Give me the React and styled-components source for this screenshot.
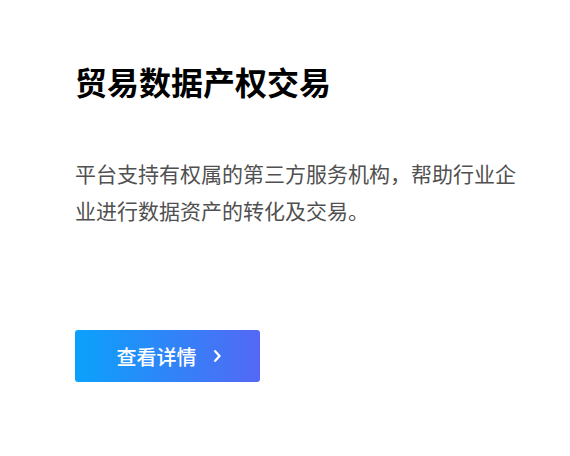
import React from "react";
import styled, { createGlobalStyle } from "styled-components";

const GlobalStyle = createGlobalStyle`
  html, body {
    margin: 0;
    padding: 0;
    background: #ffffff;
  }
  body {
    font-family: "Noto Sans CJK SC", "Noto Sans", sans-serif;
  }
`;

const Card = styled.section`
  width: 570px;
  height: 456px;
  box-sizing: border-box;
  padding: 61px 0 0 75px;
  display: flex;
  flex-direction: column;
  align-items: flex-start;
`;

const Title = styled.h2`
  margin: 0;
  font-size: 32px;
  line-height: 40px;
  font-weight: 700;
  color: #000000;
`;

const Desc = styled.p`
  margin: 54px 0 0;
  width: 450px;
  font-size: 21px;
  line-height: 37px;
  color: #505050;
`;

const DetailButton = styled.button`
  margin-top: 101px;
  width: 185px;
  height: 52px;
  border: none;
  border-radius: 3px;
  background: linear-gradient(90deg, #0aa2fb 0%, #5468f5 100%);
  color: #ffffff;
  font-family: inherit;
  font-size: 20px;
  font-weight: 500;
  display: flex;
  align-items: center;
  justify-content: center;
  gap: 16px;
  padding: 0 0 0 2px;
  cursor: pointer;

  svg {
    width: 8px;
    height: 14px;
  }
`;

const Chevron = () => (
  <svg viewBox="0 0 8 14" fill="none">
    <path d="M1.5 1.5 L6.5 7 L1.5 12.5" stroke="#fff" strokeWidth="2.2" />
  </svg>
);

export default function App() {
  return (
    <>
      <GlobalStyle />
      <Card>
        <Title>贸易数据产权交易</Title>
        <Desc>平台支持有权属的第三方服务机构，帮助行业企业进行数据资产的转化及交易。</Desc>
        <DetailButton>
          查看详情
          <Chevron />
        </DetailButton>
      </Card>
    </>
  );
}
